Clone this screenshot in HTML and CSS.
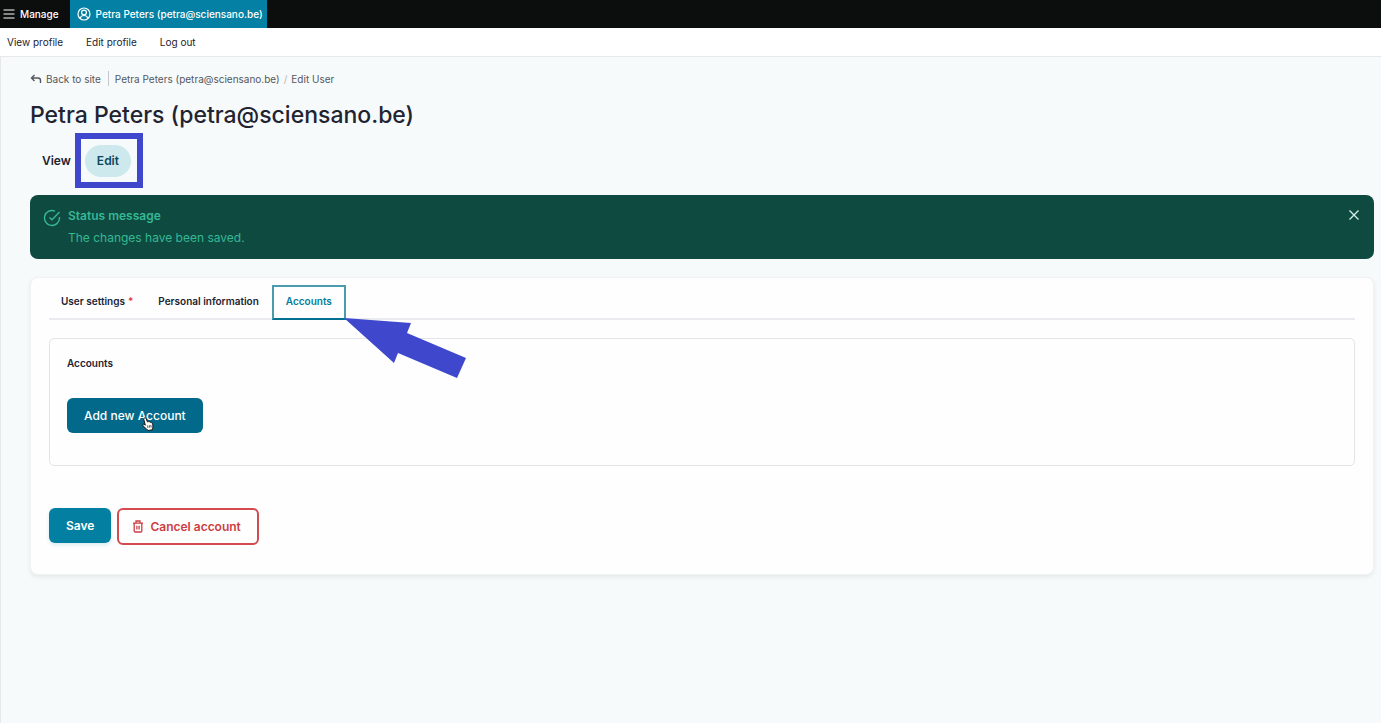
FILE: index.html
```html
<!DOCTYPE html>
<html lang="en">
<head>
  <meta charset="UTF-8">
  <meta name="viewport" content="width=device-width, initial-scale=1.0">
  <title>Petra Peters (petra@sciensano.be)</title>
  <link rel="stylesheet" href="styles.css">
</head>
<body>
  <nav class="toolbar">
    <a class="toolbar-item" href="#">
      <svg class="icon-menu" viewBox="0 0 12 12"><path d="M0.500 2h11M0.500 6h11M0.500 10h11"/></svg>
      Manage
    </a>
    <a class="toolbar-item toolbar-user" href="#">
      <svg class="icon-user" viewBox="0 0 14 14">
        <circle cx="7" cy="7" r="6"/>
        <circle cx="7" cy="5.500" r="2.400"/>
        <path d="M3.200 11.500c.3-2 1.800-3 3.800-3s3.500 1 3.800 3"/>
      </svg>
      Petra Peters (petra@sciensano.be)
    </a>
  </nav>
  <nav class="tray">
    <a href="#">View profile</a>
    <a href="#">Edit profile</a>
    <a href="#">Log out</a>
  </nav>

  <main class="page">
    <nav class="breadcrumb">
      <a class="back" href="#">
        <svg class="icon-back" viewBox="0 0 12 10"><path d="M4.500 1L1.500 4l3 3M1.500 4h6.500c1.700 0 2.500.8 2.500 2.500V9"/></svg>
        Back to site
      </a>
      <a href="#">Petra Peters (petra@sciensano.be)</a>
      <span class="slash">/</span>
      <span>Edit User</span>
    </nav>
    <h1>Petra Peters (petra@sciensano.be)</h1>

    <nav class="page-tabs">
      <a class="page-tab" href="#">View</a>
      <div class="marked"><a class="page-tab active" href="#">Edit</a></div>
    </nav>

    <section class="message">
      <svg class="icon-check" viewBox="0 0 18 18"><path d="M16.500 8v1a7.500 7.500 0 1 1-4.500-6.900M16.500 3L9 10.800 6.500 8.400"/></svg>
      <div class="message-body">
        <h2>Status message</h2>
        <p>The changes have been saved.</p>
      </div>
      <button class="message-close" type="button" aria-label="Close">
        <svg viewBox="0 0 12 12"><path d="M1.500 1.500l9 9M10.500 1.500l-9 9"/></svg>
      </button>
    </section>

    <form class="card">
      <nav class="form-tabs">
        <a class="form-tab" href="#">User settings<span class="required">*</span></a>
        <a class="form-tab" href="#">Personal information</a>
        <a class="form-tab active" href="#">Accounts
          <svg class="arrow" viewBox="0 0 122 60"><path d="M0 0L67 5 63 15 122 40 113 60 54 35 50 45z"/></svg>
        </a>
      </nav>

      <fieldset class="accounts">
        <h3>Accounts</h3>
        <button class="button add" type="button">Add new Account
          <svg class="cursor" viewBox="0 0 12 14"><path d="M2.500 1c.8-.4 1.400 0 1.700.8l1.200 3c.6-.4 1.300-.3 1.600.2.600-.4 1.200-.2 1.500.3.700-.3 1.400 0 1.700.8.900 2.200 1 3.800.2 5.600l.2 1-4.600.8-.5-.8C4 12 2.800 10.600 1 8.600.3 7.600 1.200 6.800 2.200 7.400l1.100.8L1.800 2.500c-.2-.7 0-1.200.7-1.500z"/><path class="fingers" d="M5.500 8.500l.5 2.500M7.200 8.200l.5 2.500M8.800 8l.4 2.400"/></svg>
        </button>
      </fieldset>

      <div class="actions">
        <button class="button save" type="submit">Save</button>
        <a class="button cancel" href="#">
          <svg class="icon-trash" viewBox="0 0 12 13"><path d="M1 3.200h10M4 3V1h4v2M2.200 3.500V11q0 1 1 1h5.600q1 0 1-1V3.500M4.900 5.800v3.600M7.100 5.800v3.600"/></svg>
          Cancel account
        </a>
      </div>
    </form>
  </main>
</body>
</html>
```
FILE: styles.css
```css
* {
  box-sizing: border-box;
}
body {
  margin: 0;
  min-height: 100vh;
  font-family: Inter, sans-serif;
  font-size: 10px;
  color: #222330;
  background-color: #f6fafb;
}
a {
  color: inherit;
  text-decoration: none;
}
svg {
  flex: none;
  fill: none;
  stroke: currentColor;
}
.toolbar {
  display: flex;
  height: 28px;
  background-color: #0c0d0d;
  color: #fff;
  font-weight: 500;
}
.toolbar-item {
  display: flex;
  align-items: center;
  gap: 5px;
  padding: 0 11px 0 3px;
}
.toolbar-user {
  padding: 0 4px 0 7px;
  background-color: #0380a3;
}
.icon-menu {
  width: 12px;
  height: 12px;
}
.icon-user {
  width: 14px;
  height: 14px;
  stroke-width: 1.2;
}
.tray {
  display: flex;
  align-items: center;
  gap: 23px;
  height: 29px;
  padding: 0 7px;
  background-color: #fff;
  border-bottom: 1px solid #e6e8ea;
}
.page {
  padding: 14px 7px 0 29px;
  border-left: 1px solid #e6e8ea;
  min-height: calc(100vh - 57px);
}
.breadcrumb {
  display: flex;
  align-items: center;
  height: 15px;
  color: #55575d;
}
.back {
  display: flex;
  align-items: center;
  gap: 4px;
  height: 15px;
  padding-right: 7px;
  margin-right: 6px;
  border-right: 1px solid #c4c7cb;
}
.icon-back {
  width: 12px;
  height: 10px;
  stroke-width: 1.4;
}
.slash {
  margin: 0 4px;
  color: #b4b7bc;
}
h1 {
  margin: 13px 0 0;
  font-size: 23px;
  line-height: 32px;
  font-weight: 500;
}
.page-tabs {
  display: flex;
  align-items: center;
  gap: 4px;
  margin-top: 2px;
  padding-left: 12px;
  font-size: 12px;
  font-weight: 600;
}
.marked {
  padding: 6px 6px 5px 4px;
  border: 6px solid #3f48cc;
}
.page-tab.active {
  display: block;
  padding: 0 12px;
  border-radius: 16px;
  line-height: 32px;
  color: #08485c;
  background-color: #cde9ed;
}
.message {
  display: flex;
  align-items: flex-start;
  margin-top: 7px;
  padding: 13px;
  border-radius: 8px;
  background-color: #0f4a40;
  color: #35b894;
}
.message h2,
.message p {
  margin: 0;
  font-size: 12px;
  line-height: 16px;
}
.message h2 {
  font-weight: 600;
}
.message p {
  margin-top: 6px;
}
.message-body {
  flex: 1;
  margin-left: 7px;
}
.icon-check {
  width: 18px;
  height: 18px;
  margin-top: 1px;
  stroke-width: 1.4;
}
.message-close {
  width: 14px;
  height: 14px;
  padding: 1px;
  border: none;
  background: none;
  color: #d5f2e9;
}
.message-close svg {
  display: block;
  width: 12px;
  height: 12px;
  stroke-width: 1.3;
}
.card {
  margin-top: 18px;
  padding: 7px 18px 29px;
  border: 1px solid #f0f2f4;
  border-radius: 8px;
  background-color: #fefefe;
  box-shadow: 0 2px 5px rgba(0, 0, 0, 0.07);
}
.form-tabs {
  display: flex;
  gap: 1px;
  height: 35px;
  border-bottom: 2px solid #e9ebee;
  font-weight: 600;
  line-height: 32px;
}
.form-tab {
  position: relative;
  height: 35px;
  padding: 0 12px;
}
.form-tab.active {
  border: 2px solid #4a9bab;
  border-bottom-color: #036f91;
  line-height: 28px;
  color: #037d9c;
}
.required {
  margin-left: 3px;
  color: #dc3a41;
}
.arrow {
  position: absolute;
  left: 100%;
  top: 100%;
  width: 122px;
  height: 60px;
  fill: #3f48cc;
  stroke: none;
}
.accounts {
  margin: 18px 0 0;
  padding: 17px 17px 32px;
  border: 1px solid #e2e4e8;
  border-radius: 5px;
}
.accounts h3 {
  margin: 0 0 28px;
  font-size: 10px;
  line-height: 14px;
  font-weight: 600;
}
.button {
  display: flex;
  align-items: center;
  height: 35px;
  padding: 0 17px;
  border: none;
  border-radius: 6px;
  color: #fff;
  font-family: inherit;
  font-size: 12px;
  font-weight: 600;
}
.add {
  position: relative;
  background-color: #03698a;
  font-weight: 500;
}
.cursor {
  position: absolute;
  left: 75px;
  top: 19px;
  width: 12px;
  height: 14px;
  fill: #fff;
  stroke: #111;
}
.fingers {
  stroke-width: 0.7;
}
.actions {
  display: flex;
  gap: 6px;
  margin-top: 42px;
}
.save {
  background-color: #037fa2;
  box-shadow: 0 2px 4px rgba(3, 127, 162, 0.15);
}
.cancel {
  gap: 6px;
  height: 37px;
  padding: 0 16px 0 13px;
  border: 2px solid #d34b4e;
  color: #cc3d42;
}
.icon-trash {
  width: 12px;
  height: 13px;
  stroke-width: 1.3;
}
```
